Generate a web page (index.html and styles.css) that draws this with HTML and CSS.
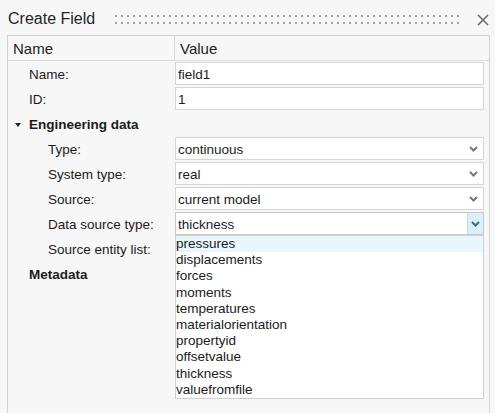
FILE: index.html
```html
<!DOCTYPE html>
<html>
<head>
<meta charset="utf-8">
<link rel="stylesheet" href="styles.css">
</head>
<body>
<div class="titlebar">
  <span class="title">Create Field</span>
  <span class="grip"></span>
  <svg class="close" width="12" height="12" viewBox="0 0 12 12"><path d="M1 1 L11 11 M11 1 L1 11" stroke="#6b6b6b" stroke-width="1.6" fill="none"/></svg>
</div>
<div class="panel">
  <div class="head">
    <div class="hcell namecol">Name</div>
    <div class="hcell">Value</div>
  </div>
  <div class="row">
    <div class="label l1">Name:</div>
    <div class="val"><div class="box">field1</div></div>
  </div>
  <div class="row">
    <div class="label l1">ID:</div>
    <div class="val"><div class="box">1</div></div>
  </div>
  <div class="row">
    <div class="label group"><span class="tri"></span>Engineering data</div>
    <div class="val"></div>
  </div>
  <div class="row">
    <div class="label l2">Type:</div>
    <div class="val"><div class="box combo"><span>continuous</span><svg class="chev" width="9" height="6" viewBox="0 0 9 6"><path d="M1 1 L4.5 4.5 L8 1" stroke="#777" stroke-width="2" fill="none"/></svg></div></div>
  </div>
  <div class="row">
    <div class="label l2">System type:</div>
    <div class="val"><div class="box combo"><span>real</span><svg class="chev" width="9" height="6" viewBox="0 0 9 6"><path d="M1 1 L4.5 4.5 L8 1" stroke="#777" stroke-width="2" fill="none"/></svg></div></div>
  </div>
  <div class="row">
    <div class="label l2">Source:</div>
    <div class="val"><div class="box combo"><span>current model</span><svg class="chev" width="9" height="6" viewBox="0 0 9 6"><path d="M1 1 L4.5 4.5 L8 1" stroke="#777" stroke-width="2" fill="none"/></svg></div></div>
  </div>
  <div class="row">
    <div class="label l2">Data source type:</div>
    <div class="val open">
      <div class="box combo active"><span>thickness</span><span class="btn"><svg class="chev2" width="9" height="6" viewBox="0 0 9 6"><path d="M1 1 L4.5 4.5 L8 1" stroke="#56606a" stroke-width="2" fill="none"/></svg></span></div>
      <ul class="list">
        <li class="hl">pressures</li>
        <li>displacements</li>
        <li>forces</li>
        <li>moments</li>
        <li>temperatures</li>
        <li>materialorientation</li>
        <li>propertyid</li>
        <li>offsetvalue</li>
        <li>thickness</li>
        <li>valuefromfile</li>
      </ul>
    </div>
  </div>
  <div class="row">
    <div class="label l2">Source entity list:</div>
    <div class="val"></div>
  </div>
  <div class="row">
    <div class="label group nt">Metadata</div>
    <div class="val"></div>
  </div>
</div>
</body>
</html>
```
FILE: styles.css
```css
html, body {
  margin: 0;
  padding: 0;
  background: #f7f7f7;
  font-family: "Liberation Sans", Arial, sans-serif;
  color: #1b1b1b;
  overflow: hidden;
  height: 413px;
}
.titlebar {
  height: 35px;
  display: flex;
  align-items: center;
  padding-left: 8px;
  box-sizing: border-box;
}
.title {
  font-size: 16px;
  color: #262626;
  margin-top: 2px;
}
.grip {
  width: 346px;
  height: 9px;
  margin-left: 20px;
  margin-top: 3px;
  background-image:
    linear-gradient(90deg, #a0a0a0 2px, transparent 2px),
    linear-gradient(90deg, #a0a0a0 2px, transparent 2px);
  background-size: 6px 2px, 6px 2px;
  background-position: 0 0, 0 7px;
  background-repeat: repeat-x;
}
.close {
  margin-left: 16px;
  margin-top: 4px;
}
.panel {
  margin-left: 7px;
  width: 483px;
  height: 378px;
  box-sizing: border-box;
  border: 1px solid #d2d2d2;
  border-bottom: none;
}
.head {
  display: grid;
  grid-template-columns: 167px 1fr;
  height: 25px;
  border-bottom: 1px solid #dadada;
  box-sizing: border-box;
}
.hcell {
  font-size: 15px;
  line-height: 25px;
  padding-left: 5px;
  color: #222;
}
.namecol {
  border-right: 1px solid #dadada;
}
.row {
  display: grid;
  grid-template-columns: 167px 1fr;
  height: 25px;
}
.label {
  font-size: 13.5px;
  line-height: 25px;
  padding-top: 1px;
  box-sizing: border-box;
  white-space: nowrap;
}
.l1 { padding-left: 21px; }
.l2 { padding-left: 40px; }
.group {
  font-weight: bold;
  padding-left: 6px;
  display: flex;
  align-items: center;
}
.group.nt { padding-left: 21px; }
.tri {
  width: 0;
  height: 0;
  border-left: 3.5px solid transparent;
  border-right: 3.5px solid transparent;
  border-top: 4px solid #222;
  margin-right: 8px;
  margin-left: 1px;
}
.val {
  position: relative;
  padding: 1px 5px 1px 0;
}
.box {
  height: 23px;
  box-sizing: border-box;
  background: #fff;
  border: 1px solid #d6d6d6;
  font-size: 13.5px;
  line-height: 21px;
  padding-left: 2px;
  padding-top: 1px;
  display: flex;
  align-items: center;
}
.combo span:first-child { flex: 1; }
.chev { margin-right: 5px; margin-top: -1px; }
.active { border-color: #c9c9c9; padding-top: 0; }
.active span:first-child { padding-top: 1px; }
.btn {
  width: 15px;
  height: 21px;
  background: #d9eff9;
  border-left: 1px solid #c8dde8;
  display: flex;
  align-items: center;
  justify-content: center;
}
.list {
  position: absolute;
  left: 0;
  top: 24px;
  width: 309px;
  margin: 0;
  padding: 0;
  list-style: none;
  background: #fff;
  border: 1px solid #cfcfcf;
  box-sizing: border-box;
  z-index: 2;
}
.list li {
  font-size: 13.5px;
  height: 16.2px;
  line-height: 16.2px;
  padding-left: 0;
  white-space: nowrap;
}
.list li.hl {
  background: #e9f6fc;
}
```
